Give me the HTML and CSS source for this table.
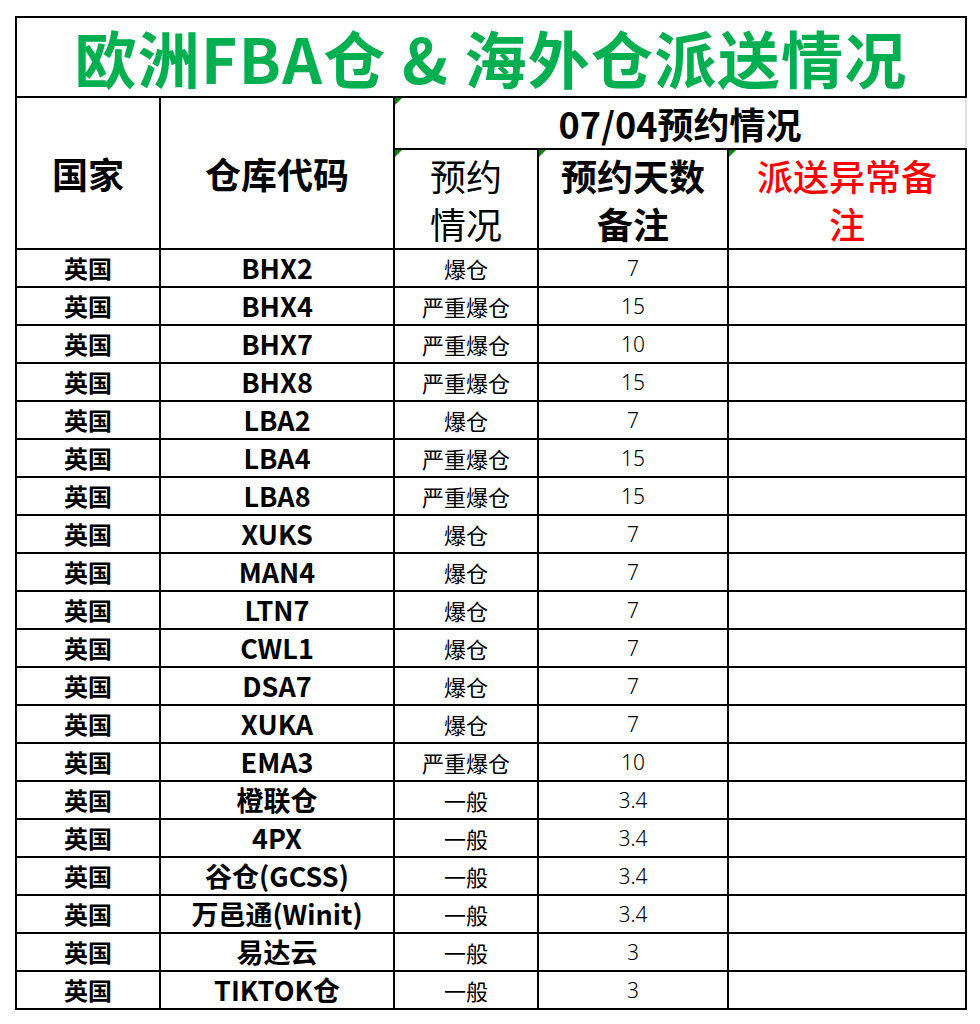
FILE: index.html
```html
<!DOCTYPE html>
<html lang="zh-CN">
<head>
<meta charset="utf-8">
<title>欧洲FBA仓 &amp; 海外仓派送情况</title>
<link rel="stylesheet" href="styles.css">
</head>
<body>
<div class="sheet">
<table class="grid">
  <colgroup>
    <col class="c1"><col class="c2"><col class="c3"><col class="c4"><col class="c5">
  </colgroup>
  <thead>
    <tr class="r-title"><th colspan="5" class="title">欧洲FBA仓 &amp; 海外仓派送情况</th></tr>
    <tr class="r-sub">
      <th rowspan="2" class="hd">国家</th>
      <th rowspan="2" class="hd">仓库代码</th>
      <th colspan="3" class="date note">07/04预约情况</th>
    </tr>
    <tr class="r-sub2">
      <th class="hd light note">预约<br>情况</th>
      <th class="hd note">预约天数<br>备注</th>
      <th class="hd red note">派送异常备<br>注</th>
    </tr>
  </thead>
  <tbody>
    <tr><td class="cty">英国</td><td class="code">BHX2</td><td class="st">爆仓</td><td class="num">7</td><td></td></tr>
    <tr><td class="cty">英国</td><td class="code">BHX4</td><td class="st">严重爆仓</td><td class="num">15</td><td></td></tr>
    <tr><td class="cty">英国</td><td class="code">BHX7</td><td class="st">严重爆仓</td><td class="num">10</td><td></td></tr>
    <tr><td class="cty">英国</td><td class="code">BHX8</td><td class="st">严重爆仓</td><td class="num">15</td><td></td></tr>
    <tr><td class="cty">英国</td><td class="code">LBA2</td><td class="st">爆仓</td><td class="num">7</td><td></td></tr>
    <tr><td class="cty">英国</td><td class="code">LBA4</td><td class="st">严重爆仓</td><td class="num">15</td><td></td></tr>
    <tr><td class="cty">英国</td><td class="code">LBA8</td><td class="st">严重爆仓</td><td class="num">15</td><td></td></tr>
    <tr><td class="cty">英国</td><td class="code">XUKS</td><td class="st">爆仓</td><td class="num">7</td><td></td></tr>
    <tr><td class="cty">英国</td><td class="code">MAN4</td><td class="st">爆仓</td><td class="num">7</td><td></td></tr>
    <tr><td class="cty">英国</td><td class="code">LTN7</td><td class="st">爆仓</td><td class="num">7</td><td></td></tr>
    <tr><td class="cty">英国</td><td class="code">CWL1</td><td class="st">爆仓</td><td class="num">7</td><td></td></tr>
    <tr><td class="cty">英国</td><td class="code">DSA7</td><td class="st">爆仓</td><td class="num">7</td><td></td></tr>
    <tr><td class="cty">英国</td><td class="code">XUKA</td><td class="st">爆仓</td><td class="num">7</td><td></td></tr>
    <tr><td class="cty">英国</td><td class="code">EMA3</td><td class="st">严重爆仓</td><td class="num">10</td><td></td></tr>
    <tr><td class="cty">英国</td><td class="code">橙联仓</td><td class="st">一般</td><td class="num">3.4</td><td></td></tr>
    <tr><td class="cty">英国</td><td class="code">4PX</td><td class="st">一般</td><td class="num">3.4</td><td></td></tr>
    <tr><td class="cty">英国</td><td class="code">谷仓(GCSS)</td><td class="st">一般</td><td class="num">3.4</td><td></td></tr>
    <tr><td class="cty">英国</td><td class="code">万邑通(Winit)</td><td class="st">一般</td><td class="num">3.4</td><td></td></tr>
    <tr><td class="cty">英国</td><td class="code">易达云</td><td class="st">一般</td><td class="num">3</td><td></td></tr>
    <tr><td class="cty">英国</td><td class="code">TIKTOK仓</td><td class="st">一般</td><td class="num">3</td><td></td></tr>
  </tbody>
</table>
</div>
</body>
</html>
```

FILE: styles.css
```css
html, body {
  margin: 0;
  padding: 0;
  background: #ffffff;
}

body {
  font-family: "Noto Sans CJK SC", "Noto Sans", sans-serif;
  color: #000;
}

.sheet {
  padding: 16px 0 0 15px;
}

.grid {
  border-collapse: collapse;
  table-layout: fixed;
  width: 950px;
}

.c1 { width: 144px; }
.c2 { width: 234px; }
.c3 { width: 144px; }
.c4 { width: 190px; }
.c5 { width: 238px; }

.grid th,
.grid td {
  border: 2px solid #000;
  padding: 0;
  text-align: center;
  vertical-align: middle;
  position: relative;
}

.r-title { height: 80px; }
.r-sub { height: 52px; }
.r-sub2 { height: 100px; }
.grid tbody tr { height: 38px; }

.title {
  color: #00b050;
  font-size: 62px;
  font-weight: 700;
  line-height: 74px;
  letter-spacing: 1.3px;
  white-space: nowrap;
}

.hd {
  font-size: 36px;
  font-weight: 700;
  line-height: 48px;
  padding-top: 2px;
}

.hd.light {
  font-weight: 400;
}

.hd.red {
  color: #ff0000;
  font-weight: 500;
}

.date {
  font-size: 36px;
  font-weight: 700;
  line-height: 44px;
  padding-top: 2px;
  border-right-color: #e0e0e0 !important;
}

.note::before {
  content: "";
  position: absolute;
  left: 0;
  top: 0;
  width: 0;
  height: 0;
  border-top: 7px solid #0a8a0a;
  border-right: 7px solid transparent;
}

.cty {
  font-size: 24px;
  font-weight: 700;
  line-height: 30px;
  padding-top: 2px;
}

.code {
  font-size: 27px;
  font-weight: 700;
  line-height: 30px;
  padding-top: 3px;
}

.st {
  font-size: 22px;
  font-weight: 400;
  line-height: 30px;
  padding-top: 1px;
}

.num {
  font-size: 21px;
  font-weight: 300;
  line-height: 30px;
  font-family: "Noto Sans", "Liberation Sans", sans-serif;
}
```
